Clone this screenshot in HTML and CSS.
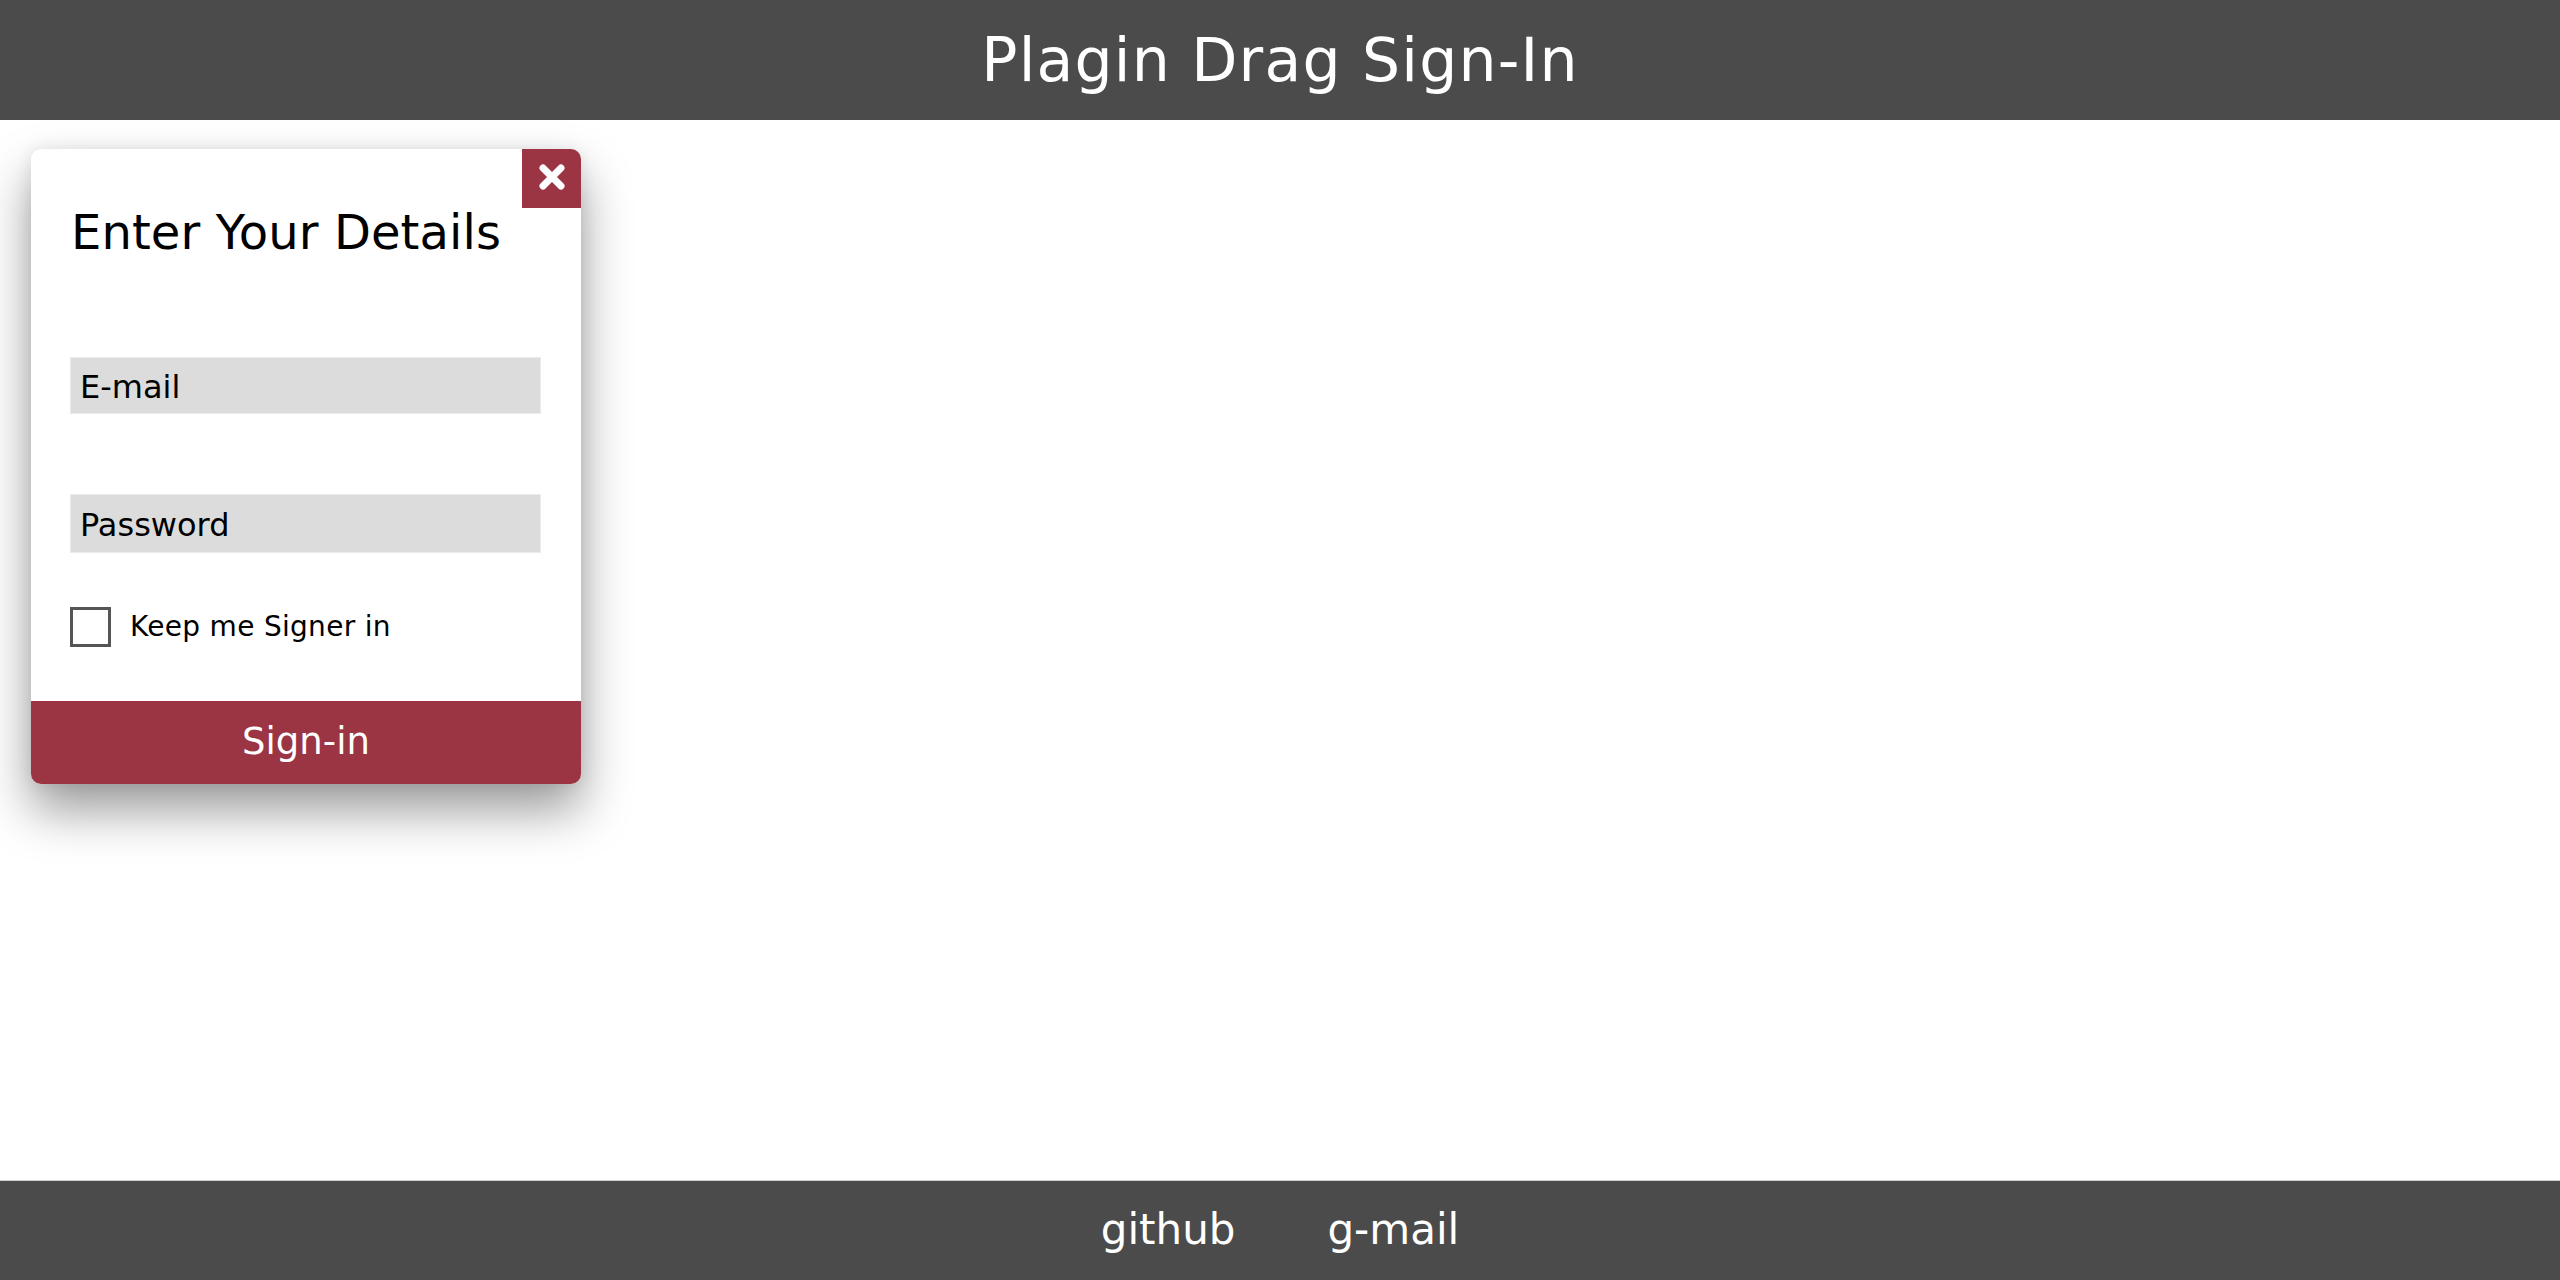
FILE: index.html
```html
<!DOCTYPE html>
<html lang="en">
<head>
<meta charset="utf-8">
<title>Plagin Drag Sign-In</title>
<link rel="stylesheet" href="styles.css">
</head>
<body>
<div class="page">
  <header class="topbar">
    <h1 class="topbar-title">Plagin Drag Sign-In</h1>
  </header>
  <main class="stage">
    <form class="signin-card">
      <button type="button" class="close-btn" aria-label="Close">
        <svg width="28" height="28" viewBox="0 0 28 28" aria-hidden="true">
          <path d="M5 5 L23 23 M23 5 L5 23" stroke="#fff" stroke-width="7" stroke-linecap="round" fill="none"/>
        </svg>
      </button>
      <div class="card-body">
        <h2 class="card-title">Enter Your Details</h2>
        <input class="field field-email" type="text" placeholder="E-mail">
        <input class="field field-pass" type="password" placeholder="Password">
        <label class="keep-row">
          <span class="check-box"></span>
          <span class="keep-label">Keep me Signer in</span>
        </label>
      </div>
      <button type="button" class="submit-btn">Sign-in</button>
    </form>
  </main>
  <footer class="bottombar">
    <a class="foot-link" href="#">github</a>
    <a class="foot-link" href="#">g-mail</a>
  </footer>
</div>
</body>
</html>
```
FILE: styles.css
```css
* { box-sizing: border-box; }
html, body { margin: 0; padding: 0; }
body {
  font-family: "DejaVu Sans", "Liberation Sans", sans-serif;
  background: #fff;
  color: #000;
}
.page {
  min-height: 100vh;
  display: grid;
  grid-template-rows: 120px 1fr 100px;
}
.topbar {
  background: #4b4b4b;
  display: flex;
  align-items: center;
  justify-content: center;
  padding-top: 2px;
}
.topbar-title {
  margin: 0;
  color: #fff;
  font-weight: normal;
  font-size: 60px;
  letter-spacing: 1.2px;
  line-height: 1.164;
}
.stage {
  padding: 29px 31px;
}
.signin-card {
  position: relative;
  width: 550px;
  background: #fff;
  border-radius: 10px;
  box-shadow: 0 26px 50px rgba(0,0,0,0.4), 0 0 16px rgba(0,0,0,0.08);
}
.close-btn {
  position: absolute;
  top: 0;
  right: 0;
  width: 59px;
  height: 59px;
  border: 0;
  padding: 0;
  margin: 0;
  background: #9b3443;
  border-top-right-radius: 10px;
  display: flex;
  align-items: center;
  justify-content: center;
}
.close-btn svg { display: block; margin-top: -3px; }
.card-body {
  padding: 55px 40px 54px 39px;
  display: flex;
  flex-direction: column;
}
.card-title {
  margin: 0 0 97px 0;
  font-weight: normal;
  font-size: 48px;
  line-height: 56px;
  height: 56px;
  padding-left: 1px;
  letter-spacing: 0.1px;
}
.field {
  display: block;
  width: 471px;
  height: 57px;
  margin: 0;
  border: 1px solid #ebebeb;
  background: #dcdcdc;
  font-family: "DejaVu Sans", "Liberation Sans", sans-serif;
  font-size: 32px;
  padding: 2px 0 0 9px;
  color: #000;
  outline: none;
}
.field::placeholder { color: #000; opacity: 1; }
.field-email { margin-bottom: 80px; }
.field-pass { height: 59px; margin-bottom: 54px; }
.keep-row {
  display: flex;
  align-items: center;
  height: 40px;
}
.check-box {
  width: 41px;
  height: 40px;
  border: 3px solid #555;
  background: #fff;
  flex: none;
}
.keep-label {
  margin-left: 19px;
  font-size: 28px;
  letter-spacing: 0.3px;
  line-height: 40px;
}
.submit-btn {
  display: block;
  width: 100%;
  height: 83px;
  border: 0;
  margin: 0;
  padding: 0 0 2px 0;
  background: #9b3443;
  color: #fff;
  font-family: "DejaVu Sans", "Liberation Sans", sans-serif;
  font-size: 37px;
  border-radius: 0 0 10px 10px;
}
.bottombar {
  background: #4b4b4b;
  border-top: 1px solid #cfcfcf;
  display: flex;
  align-items: center;
  justify-content: center;
  gap: 92px;
  padding-bottom: 3px;
}
.foot-link {
  color: #fff;
  text-decoration: none;
  font-size: 42px;
}
```
